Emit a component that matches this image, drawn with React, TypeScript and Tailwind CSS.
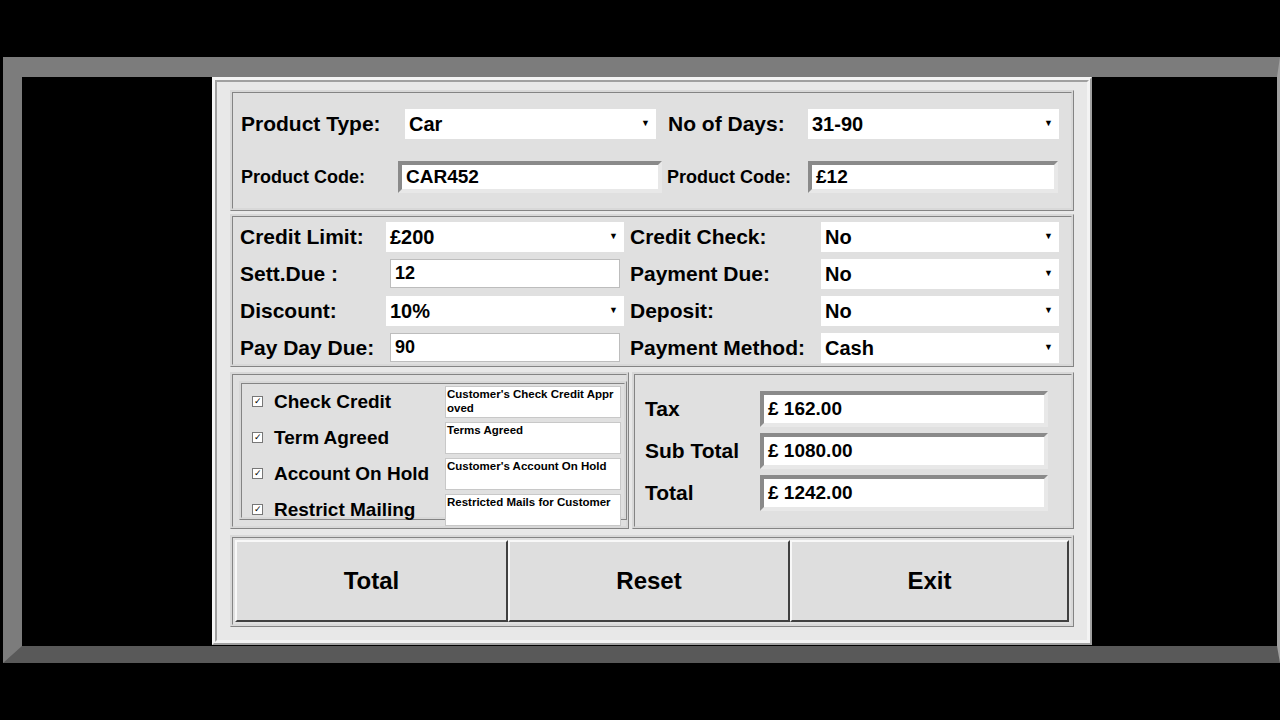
const F = { fontFamily: "'Liberation Sans', Arial, sans-serif" };

function Combo({ value, w }: { value: string; w: string }) {
  return (
    <div className={`${w} h-[32px] bg-white flex items-center justify-between px-1 border border-[#e0e0e0]`}>
      <span className="text-[20px] font-bold text-black">{value}</span>
      <span className="text-[9px] text-black mr-0.5">▼</span>
    </div>
  );
}

function Sunken({ value, w, h = "h-[32px]", size = "text-[19px]" }: { value: string; w: string; h?: string; size?: string }) {
  return (
    <div className={`${w} ${h} bg-white flex items-center px-1 border-[4px] border-t-[#8a8a8a] border-l-[#8a8a8a] border-r-[#e8e8e8] border-b-[#e8e8e8] ${size} font-bold`}>
      {value}
    </div>
  );
}

function Thin({ value, w }: { value: string; w: string }) {
  return (
    <div className={`${w} h-[29px] bg-white border border-[#bdbdbd] flex items-center px-1 text-[18px] font-bold`}>{value}</div>
  );
}

const frame = "border-[3px] [border-style:ridge] border-[#d8d8d8]";

export default function App() {
  const checks = [
    ["Check Credit", "Customer's Check Credit Approved"],
    ["Term Agreed", "Terms Agreed"],
    ["Account On Hold", "Customer's Account On Hold"],
    ["Restrict Mailing", "Restricted Mails for Customer"],
  ];
  return (
    <div className="w-[1280px] h-[720px] bg-black overflow-hidden" style={F}>
      <div className="mt-[57px] ml-[3px] h-[606px] w-[1277px] border-t-[20px] border-l-[19px] border-r-[3px] border-b-[17px] border-t-[#7c7c7c] border-l-[#7c7c7c] border-r-[#a0a0a0] border-b-[#595959] bg-black">
        <div className="ml-[190px] w-[880px] h-[568px] bg-[#e8e8e8] border-[5px] [border-style:ridge] border-[#f4f4f4] p-[13px] pt-[8px] flex flex-col gap-[3px] text-black">
          {/* section 1 */}
          <div className={`${frame} h-[126px] bg-[#e0e0e0] px-[8px] flex flex-col`}>
            <div className="flex items-center mt-[14px] h-[34px]">
              <span className="text-[21px] font-bold w-[163px]">Product Type:</span>
              <Combo value="Car" w="w-[253px]" />
              <span className="text-[21px] font-bold ml-[11px] w-[139px]">No of Days:</span>
              <Combo value="31-90" w="w-[253px]" />
            </div>
            <div className="flex items-center mt-[20px]">
              <span className="text-[18px] font-bold w-[157px]">Product Code:</span>
              <Sunken value="CAR452" w="w-[264px]" />
              <span className="text-[18px] font-bold ml-[5px] w-[141px]">Product Code:</span>
              <Sunken value="£12" w="w-[250px]" />
            </div>
          </div>
          {/* section 2 */}
          <div className={`${frame} h-[155px] bg-[#e0e0e0] px-[7px] pt-[4px] grid grid-cols-[390px_1fr] gap-y-[5px]`}>
            {[
              ["Credit Limit:", "£200", true, "Credit Check:", "No"],
              ["Sett.Due :", "12", false, "Payment Due:", "No"],
              ["Discount:", "10%", true, "Deposit:", "No"],
              ["Pay Day Due:", "90", false, "Payment Method:", "Cash"],
            ].map(([l, v, combo, r, rv], i) => (
              <div key={i} className="contents">
                <div className="flex items-center h-[32px]">
                  <span className="text-[21px] font-bold w-[145px] whitespace-nowrap">{l as string}</span>
                  {combo ? <Combo value={v as string} w="w-[240px]" /> : <Thin value={v as string} w="w-[230px] ml-[5px]" />}
                </div>
                <div className="flex items-center h-[32px]">
                  <span className="text-[21px] font-bold w-[190px] whitespace-nowrap">{r as string}</span>
                  <Combo value={rv as string} w="w-[240px]" />
                </div>
              </div>
            ))}
          </div>
          {/* section 3 */}
          <div className="flex h-[157px] gap-[3px] mt-[2px]">
            <div className={`${frame} w-[399px] bg-[#e0e0e0] p-[6px] flex`}>
              <div className={`${frame} flex-1 bg-[#e0e0e0] pl-[10px] pr-[3px] py-[2px] flex flex-col gap-[4px]`}>
                {checks.map(([a, b]) => (
                  <div key={a} className="flex items-center h-[32px]">
                    <span className="w-[11px] h-[11px] bg-white border border-[#777] text-[9px] leading-[9px] flex items-center justify-center">✓</span>
                    <span className="text-[19px] font-bold ml-[11px] w-[171px] whitespace-nowrap">{a}</span>
                    <div className="w-[176px] h-[32px] bg-white border border-[#c8c8c8] text-[11.5px] font-bold leading-[14px] px-[1px] break-all">{b}</div>
                  </div>
                ))}
              </div>
            </div>
            <div className={`${frame} flex-1 bg-[#e0e0e0] px-[10px] pt-[16px] flex flex-col gap-[6px]`}>
              {[
                ["Tax", "£ 162.00"],
                ["Sub Total", "£ 1080.00"],
                ["Total", "£ 1242.00"],
              ].map(([l, v]) => (
                <div key={l} className="flex items-center">
                  <span className="text-[21px] font-bold w-[115px] whitespace-nowrap">{l}</span>
                  <Sunken value={v} w="w-[288px]" h="h-[36px]" />
                </div>
              ))}
            </div>
          </div>
          {/* section 4 */}
          <div className={`${frame} h-[96px] bg-[#e0e0e0] p-[2px] flex mt-[3px]`}>
            {["Total", "Reset", "Exit"].map((t, i) => (
              <div
                key={t}
                className={`${i === 0 ? "w-[273px]" : i === 1 ? "w-[282px]" : "flex-1"} h-full bg-[#dedede] border-[2px] border-t-[#f8f8f8] border-l-[#f8f8f8] border-r-[#404040] border-b-[#404040] flex items-center justify-center text-[24px] font-bold`}
              >
                {t}
              </div>
            ))}
          </div>
        </div>
      </div>
    </div>
  );
}
